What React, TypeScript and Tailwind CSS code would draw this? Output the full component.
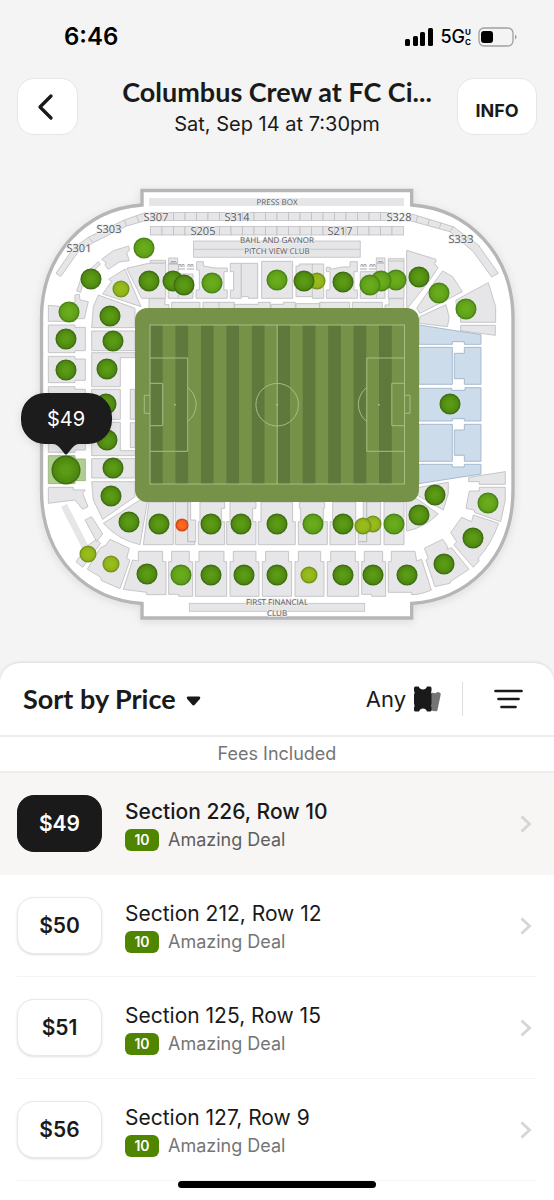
const SEAT = '#e6e6e8';
const SEAT_LINE = '#bfbfc3';

type Tone = 'dark' | 'light' | 'lime' | 'orange';

const TONES: Record<Tone, { inner: string; outer: string; ring: string }> = {
  dark: { inner: '#5a9a14', outer: '#4b840f', ring: '#416f14' },
  light: { inner: '#69ac1b', outer: '#5b9b18', ring: '#4c8519' },
  lime: { inner: '#98bc1b', outer: '#8caf18', ring: '#77941c' },
  orange: { inner: '#ff6a1f', outer: '#f4571a', ring: '#cf4d1b' },
};

// x, y, tone, radius
const DEALS: Array<[number, number, Tone, number]> = [
  [144, 248, 'light', 10], [91, 279, 'dark', 10], [121, 289, 'lime', 8], [149, 281, 'dark', 10],
  [173, 281, 'dark', 10], [184, 285, 'dark', 10], [212, 283, 'light', 10], [69, 312, 'light', 10],
  [110, 316, 'dark', 10], [277, 280, 'light', 10], [317, 281, 'lime', 8], [304, 281, 'dark', 10],
  [343, 282, 'dark', 10], [396, 280, 'light', 10], [381, 281, 'light', 10], [370, 285, 'light', 10],
  [419, 277, 'dark', 10], [439, 293, 'light', 10], [466, 309, 'light', 10],
  [66, 339, 'dark', 10], [113, 341, 'dark', 10], [66, 370, 'dark', 10], [107, 369, 'dark', 10],
  [106, 404, 'dark', 10], [107, 440, 'dark', 10], [66, 470, 'dark', 14], [113, 468, 'dark', 10],
  [111, 496, 'dark', 10], [450, 404, 'dark', 10],
  [129, 522, 'dark', 10], [159, 524, 'dark', 10], [182, 525, 'orange', 6], [211, 524, 'dark', 10],
  [241, 524, 'dark', 10], [277, 524, 'dark', 10], [313, 524, 'light', 10], [343, 524, 'dark', 10],
  [373, 524, 'lime', 8], [363, 526, 'lime', 8], [394, 524, 'light', 10], [419, 515, 'dark', 10],
  [435, 495, 'dark', 10], [488, 503, 'light', 10], [473, 538, 'dark', 10], [444, 564, 'dark', 10],
  [88, 554, 'lime', 8], [111, 564, 'lime', 8], [147, 574, 'dark', 10], [181, 575, 'light', 10],
  [211, 575, 'dark', 10], [244, 575, 'dark', 10], [277, 575, 'dark', 10], [309, 575, 'lime', 8],
  [343, 575, 'dark', 10], [373, 575, 'dark', 10], [407, 575, 'dark', 10],
];

// Seat blocks, one path list per part of the bowl, drawn at three units to the pixel
const BLOCKS: Array<{ origin: string; paths: string[] }> = [
  {
    origin: 'translate(30 180) scale(0.3333)',
    paths: [
      'M78 280L130 205L175 172L283 120L345 98L352 120L290 138L190 188L145 215L92 290ZM283 120L290 138M320 107L327 127M175 172L190 188',
      'M215 238L250 212L296 198L298 212L290 218L298 242L268 246L235 268L225 255L228 248Z',
      'M140 333L155 290L205 245L212 252L196 268L160 305L152 337Z',
      'M218 342L245 304L236 298L285 267L333 380Z',
      'M290 265L360 249H407V355H335Z',
      'M361 241H407V249H361Z',
      'M415 252H445V282H489V355H415ZM445 282V355M416 234H443V252H416Z',
      'M500 245H520V258L555 264H592V275H582V330H592V355H498V330H508V270H500Z',
      'M601 250H634V355H601V330H611V275H601Z',
      'M634 250H683V355H655V350H634Z',
      'M695 244H788V355H695Z',
      'M357 356H405V374H417V388H357Z',
      'M425 367H510V388H425ZM519 367H613V388H519ZM567 367V388M613 373H685V367H721V388H613Z',
      'M205 345L315 385V443H185L190 380Z',
      'M55 376L130 383V368H135V345L148 343L150 360L175 365L163 416H135V424H55Z',
    ],
  },
  {
    origin: 'translate(270 180) scale(0.3333)',
    paths: [
      'M425 102L550 140L625 195L685 280L665 291L610 215L540 155L420 122ZM443 108L438 126M478 118L474 137M513 128L508 146M550 140L540 155',
      'M410 211L498 238V246L492 250L505 262L480 300L410 388Z',
      'M505 290L518 273L548 290L577 335L545 352L450 400L440 385Z',
      'M450 410L528 374L537 410V418L532 440L447 430Z',
      'M558 360L655 308L677 380V427H572V400H560Z',
      'M78 258H88V252H161V355H127V350H78ZM127 252V350',
      'M169 262H181V268L218 261H240V245H262V275H252V330H262V355H169V330H180V275H169Z',
      'M271 275H345V355H271ZM319 234H345V275H319ZM319 275V355',
      'M355 236H402V355H355ZM355 243H402',
      'M40 367H76V388H3V373H40ZM149 367H239V388H149ZM247 367H337V388H247ZM78 371H149V388H78Z',
      'M345 375H357V356H401V388H345Z',
    ],
  },
  {
    origin: 'translate(10 320) scale(0.3333)',
    paths: [
      'M115 15H195V22H226V92H195V98H115Z',
      'M115 109H195V117H226V181H195V188H115Z',
      'M115 200H195V208H226V272H195V280H115Z',
      'M115 308H226V390H195V397H115Z',
      'M115 502H190V510H226L218 520L234 560L218 568L195 540L115 550Z',
      'M245 33H375V92H245Z',
      'M245 98H375V113H331V200H245Z',
      'M245 208H331V298H245Z',
      'M245 307H331V392H375V407H245Z',
      'M361 208H375V298H361ZM361 308H375V383H361Z',
      'M245 416H375V474H245Z',
    ],
  },
  {
    origin: 'translate(270 320) scale(0.3333)',
    paths: ['M572 16H676V46L572 32Z', 'M596 472L706 455V493H628V485H596Z'],
  },
  {
    origin: 'translate(30 480) scale(0.3333)',
    paths: [
      'M185 5H315V50L218 118L190 60Z',
      'M220 130L330 60L352 66L330 194Q265 180 220 130Z',
      'M357 66H430V194H340Z',
      'M436 66H473V185H495V194H436ZM473 66H482V120H497V185H473Z',
      'M510 66H584V85H574V125H584V194H505V125H510Z',
      'M600 66H678V85H668V125H678V194H590V125H600Z',
      'M693 66H788V125H796V194H685V125H693Z',
      'M325 214H398V245H408V344H350V337L280 328L308 240L325 243Z',
      'M425 214H478V245H488V349H446V343H416V245H425Z',
      'M507 214H582V245H590V349H496V245H507Z',
      'M610 214H678V245H687V349H600V245H610Z',
      'M707 214H776V245H785V349H697V245H707Z',
      'M240 178L298 205L290 235L300 240L270 326L215 302L210 290L172 268L210 205L228 195Z',
      'M138 245L175 195L200 178L212 190L158 262Z',
      'M165 120L185 110L218 162L200 185Z',
    ],
  },
  {
    origin: 'translate(270 480) scale(0.3333)',
    paths: [
      'M88 66H164V85H160V125H172V194H85V125H92V85H88Z',
      'M188 66H257V194H180V125H188Z',
      'M265 120H280V66H290V185H265ZM290 66H332V194H265V185H290Z',
      'M342 66H402V194H342Z',
      'M408 66L440 55L505 102Q460 145 410 153Z',
      'M447 22L535 7V40L520 90L440 45Z',
      'M85 214H152V245H162V349H75V245H85Z',
      'M182 214H256V245H266V349H172V245H182Z',
      'M283 214H338V245H347V349H305V343H275V245H283Z',
      'M364 214H435L440 243L455 238L484 330Q450 345 425 344V337H355V245H364Z',
      'M463 205L518 178L533 200L530 208L545 203L597 268L545 302L540 310L495 320L468 240L475 235Z',
      'M542 158L575 112L605 125L610 105L686 130Q665 190 625 235L628 242L610 262L552 195L560 185Z',
      'M598 33H628V22H706V60L692 125L615 98L612 90L588 85Z',
    ],
  },
];

const SUPPORTER_BLOCKS = [
  'M447 15L633 44V73H583V65H547V73H447Z',
  'M447 82H547V193H447Z',
  'M553 100H583V82H633V193H583V176H553Z',
  'M447 205H545V211H585V203H633V303H583V296H547V303H447Z',
  'M447 313H547V424H447Z',
  'M553 330H583V313H633V424H583V406H553Z',
  'M447 433H547V441H583V433H633V462L447 491Z',
];

const LABELS: Array<[string, number, number, number]> = [
  ['S301', 79, 252, 11], ['S303', 109, 233, 11], ['S307', 156, 221, 11], ['S314', 237, 221, 11],
  ['S328', 399, 221, 11], ['S205', 203, 235, 11], ['S217', 340, 235, 11], ['S333', 461, 243, 11],
  ['PRESS BOX', 277, 205, 8], ['BAHL AND GAYNOR', 277, 243, 8], ['PITCH VIEW CLUB', 277, 254, 8],
  ['FIRST FINANCIAL', 277, 605, 8], ['CLUB', 277, 616, 8],
];

const listings = [
  { price: '$49', title: 'Section 226, Row 10', selected: true },
  { price: '$50', title: 'Section 212, Row 12', selected: false },
  { price: '$51', title: 'Section 125, Row 15', selected: false },
  { price: '$56', title: 'Section 127, Row 9', selected: false },
];

function StatusBar() {
  return (
    <div className="flex h-[74px] items-center justify-between pl-16 pr-[37px]">
      <span className="text-2xl font-semibold text-black">6:46</span>
      <div className="flex items-center gap-[7px]">
        <svg width="28" height="18" viewBox="0 0 28 18" aria-hidden="true">
          <rect x="0" y="11" width="5" height="7" rx="1.5" />
          <rect x="8" y="8" width="5" height="10" rx="1.5" />
          <rect x="15" y="4" width="5" height="14" rx="1.5" />
          <rect x="23" y="0" width="5" height="18" rx="1.5" />
        </svg>
        <div className="flex items-center text-black">
          <span className="text-lg font-medium leading-5">5G</span>
          <span className="flex flex-col text-[8px] font-bold leading-[10px]">
            <span>U</span>
            <span>C</span>
          </span>
        </div>
        <svg width="39" height="20" viewBox="0 0 39 20" aria-hidden="true">
          <rect x="1" y="1" width="34" height="18" rx="5" fill="none" stroke="#a0a0a0" strokeWidth="1.3" />
          <rect x="3" y="4" width="12" height="12" rx="3" />
          <path d="M37 7.5Q38.6 8.5 38.6 10T37 12.5Z" fill="#a0a0a0" />
        </svg>
      </div>
    </div>
  );
}

function Header() {
  return (
    <header className="grid grid-cols-[80px_1fr_80px] items-start px-[17px] pt-1">
      <button aria-label="Back" className="flex h-[57px] w-[61px] items-center justify-center rounded-[17px] border border-[#e6e6e6] bg-white pr-1">
        <svg width="17" height="28" viewBox="0 0 17 28" fill="none" stroke="#1a1a1a" strokeWidth="3.3" strokeLinecap="round" strokeLinejoin="round" aria-hidden="true">
          <path d="M14 3L3 14L14 25" />
        </svg>
      </button>
      <div className="text-center">
        <h1 className="whitespace-nowrap font-['Lato',sans-serif] text-[27px] font-bold leading-7">Columbus Crew at FC Ci...</h1>
        <p className="mt-1 text-xl leading-7">Sat, Sep 14 at 7:30pm</p>
      </div>
      <button className="flex h-[57px] items-center justify-center rounded-[17px] border border-[#e6e6e6] bg-white pt-2 text-lg font-bold">
        INFO
      </button>
    </header>
  );
}

function Pitch() {
  return (
    <g>
      <rect x="135" y="308" width="284" height="194" rx="12" fill="#769249" />
      {[...Array(10)].map((_, i) => (
        <rect key={i} x={150 + i * 25.45} y="325" width="12.7" height="159" fill="#5f783c" />
      ))}
      <g fill="none" stroke="#a7bd86" strokeWidth="1">
        <rect x="150" y="325" width="254.5" height="159" />
        <path d="M277.2 325V484" />
        <circle cx="277.2" cy="404.7" r="21.3" />
        <path d="M150 358H187.7V451.3H150M150 383.3H162.7V425.7H150M150 395.3H144.3V413.3H150M187.7 387.5A21.3 21.3 0 0 1 187.7 421.5" />
        <path d="M404.5 358H366.8V451.3H404.5M404.5 383.3H391.8V425.7H404.5M404.5 395.3H410V413.3H404.5M366.8 387.5A21.3 21.3 0 0 0 366.8 421.5" />
      </g>
      <g fill="#c5d5ac">
        <circle cx="175" cy="404.7" r="0.8" />
        <circle cx="277.2" cy="404.7" r="0.8" />
        <circle cx="379" cy="404.7" r="0.8" />
      </g>
    </g>
  );
}

function StadiumMap() {
  return (
    <svg viewBox="0 138 554 525" className="block w-full" role="img" aria-label="Seating map">
      <defs>
        {Object.entries(TONES).map(([name, tone]) => (
          <radialGradient key={name} id={`tone-${name}`}>
            <stop offset="0.3" stopColor={tone.inner} />
            <stop offset="1" stopColor={tone.outer} />
          </radialGradient>
        ))}
        <filter id="soft" x="-10%" y="-10%" width="120%" height="120%">
          <feDropShadow dx="0" dy="2" stdDeviation="4" floodColor="#000" floodOpacity="0.1" />
        </filter>
      </defs>

      <path
        d="M142 190.5H411.7V205C469 209 513 255 513 318V490C513 560 466 600 411.7 603.5V618H142V603.5C88 600 41.5 560 41.5 490V318C41.5 255 85 209 142 205Z"
        fill="#fff"
        stroke="#b6b6b6"
        strokeWidth="3.4"
        filter="url(#soft)"
      />

      <rect x="149" y="198" width="255" height="8" fill={SEAT} />
      <g fill={SEAT} stroke={SEAT_LINE} strokeWidth="0.8">
        {[...Array(21)].map((_, i) => (
          <rect key={i} x={150.5 + i * 11.5} y="212.5" width="11.5" height="8" />
        ))}
        {[...Array(22)].map((_, i) => (
          <rect key={i} x={150.5 + i * 11.5} y="226.5" width="11.5" height="8.5" />
        ))}
        <path d="M193.5 241H360.3V257.3H193.5ZM193.5 249.3H360.3" />
        <rect x="189.3" y="603.3" width="175.4" height="8" />
      </g>
      <path d="M61 507L67 504L88 545L82 548Z" fill={SEAT} />

      {BLOCKS.map(group => (
        <g key={group.origin} transform={group.origin} fill={SEAT} stroke={SEAT_LINE} strokeWidth="2.6">
          {group.paths.map(d => <path key={d} d={d} />)}
        </g>
      ))}
      <g transform="translate(270 320) scale(0.3333)" fill="#cddceb" stroke="#9db3c8" strokeWidth="2.6">
        {SUPPORTER_BLOCKS.map(d => <path key={d} d={d} />)}
      </g>
      <g transform="translate(10 320) scale(0.3333)" fill="#b0cd92" stroke="#97b577" strokeWidth="2.6">
        <path d="M115 407H195V417H226V482H195V491H115Z" />
      </g>

      {/* suite seats */}
      <g fill="none" stroke="#a9a9ad" strokeWidth="1">
        {[181, 190, 363, 372].map(x => (
          <path key={x} d={`M${x - 3} 269H${x + 4}M${x - 2} 267V264.5H${x}V267M${x + 1} 267V264.5H${x + 3}V267`} />
        ))}
        <path d="M170 263H177M171 261.5H176M377 263H384M378 261.5H383" />
      </g>

      <Pitch />

      <g
        fill="#58585a"
        stroke="#ececee"
        strokeWidth="1.6"
        paintOrder="stroke"
        textAnchor="middle"
        textRendering="geometricPrecision"
        className="font-['Open_Sans',sans-serif]"
      >
        {LABELS.map(([text, x, y, size]) => (
          <text key={text} x={x} y={y} fontSize={size}>{text}</text>
        ))}
      </g>

      {DEALS.map(([x, y, tone, r]) => (
        <circle key={`${x}-${y}`} cx={x} cy={y} r={r - 0.2} fill={`url(#tone-${tone})`} stroke={TONES[tone].ring} strokeWidth="1.5" />
      ))}

      <g filter="url(#soft)">
        <path d="M45 393H88A24 24 0 0 1 112 417V420A24 24 0 0 1 88 444H79C76 444 74 446 72 448L68 453Q66 456 64 453L60 448C58 446 56 444 53 444H45A24 24 0 0 1 21 420V417A24 24 0 0 1 45 393Z" fill="#1a1a1a" />
      </g>
      <text x="66" y="426" fontSize="20" fill="#fff" textAnchor="middle">$49</text>
    </svg>
  );
}

function SortBar() {
  return (
    <div className="flex h-[74px] items-center justify-between border-b-2 border-[#ececec] pl-[23px] pr-[31px]">
      <button className="flex items-center gap-2.5 font-['Lato',sans-serif] text-[27px] font-bold">
        Sort by Price
        <svg width="15" height="10" viewBox="0 0 15 10" className="mt-1" aria-hidden="true">
          <path d="M1.8 0.5H13.2Q15 1 14 2.8L8.8 8.8Q7.5 10 6.2 8.8L1 2.8Q0 1 1.8 0.5Z" fill="#1a1a1a" />
        </svg>
      </button>
      <div className="flex items-center">
        <button className="flex items-center gap-2 text-[22px]">
          Any
          <svg width="27" height="26" viewBox="0 0 27 26" aria-hidden="true">
            <path d="M16 6.5L20 7Q21.5 8 23 6L25.5 6.6Q27 7 26.7 8.5L23.5 24Q23 25.5 21.5 25.2L17 24.5Z" fill="#757575" />
            <path d="M1.5 0.5H4.5Q6 3.5 9 3.5T13 0.5H16Q17.5 0.5 17.5 2V4.5Q16.5 6.5 17.5 8.5V17.5Q16.5 19.5 17.5 21.5V24Q17.5 25.5 16 25.5H13Q12 22.5 9 22.5T5 25.5H1.5Q0 25.5 0 24V21.5Q1 19.5 0 17.5V8.5Q1 6.5 0 4.5V2Q0 0.5 1.5 0.5Z" fill="#1a1a1a" />
          </svg>
        </button>
        <div className="ml-[21px] mr-[31px] h-[34px] w-px bg-[#dedede]" />
        <button aria-label="Filters">
          <svg width="29" height="20" viewBox="0 0 29 20" stroke="#1a1a1a" strokeWidth="2.7" strokeLinecap="round" aria-hidden="true">
            <path d="M1.5 2H27.5M4.5 10H24.5M7.5 18H21.5" />
          </svg>
        </button>
      </div>
    </div>
  );
}

function ListingRow({ price, title, selected }: { price: string; title: string; selected: boolean }) {
  return (
    <li className={selected ? 'bg-[#f7f6f5] px-[17px]' : 'px-[17px]'}>
      <button className={`flex h-[102px] w-full items-center border-b text-left ${selected ? 'border-transparent' : 'border-[#f3f3f3]'}`}>
        <span
          className={`flex h-[57px] w-[85px] shrink-0 items-center justify-center rounded-[17px] border text-[21px] font-semibold ${
            selected ? 'border-[#1a1a1a] bg-[#1a1a1a] text-white' : 'border-[#e8e8e8] bg-white shadow-sm'
          }`}
        >
          {price}
        </span>
        <span className="ml-[23px] flex-1 pt-1">
          <span className={`block text-[21px] leading-7 ${selected ? 'font-medium' : ''}`}>{title}</span>
          <span className={`flex items-center gap-[9px] text-lg leading-7 ${selected ? 'text-[#5e5e5e]' : 'text-[#757575]'}`}>
            <span className="flex h-[22px] w-[34px] items-center justify-center rounded-md bg-[#508500] text-sm font-semibold text-white">10</span>
            Amazing Deal
          </span>
        </span>
        <svg width="12" height="18" viewBox="0 0 12 18" fill="none" stroke="#d5d5d5" strokeWidth="2.8" className="mr-[5px]" aria-hidden="true">
          <path d="M1.5 1.5L9.5 9L1.5 16.5" />
        </svg>
      </button>
    </li>
  );
}

export default function App() {
  return (
    <div className="min-h-screen bg-[#f4f4f4] font-['Inter',sans-serif] text-[#1a1a1a]">
      <StatusBar />
      <Header />
      <StadiumMap />
      <section className="rounded-t-[20px] bg-white shadow-[0_-1px_3px_rgba(0,0,0,0.1)]">
        <SortBar />
        <p className="border-b-2 border-[#ececec] text-center text-lg leading-[34px] text-[#757575]">Fees Included</p>
        <ul>
          {listings.map(item => <ListingRow key={item.title} {...item} />)}
        </ul>
        <div className="flex justify-center pb-3">
          <div className="h-[7px] w-[198px] rounded-full bg-black" />
        </div>
      </section>
    </div>
  );
}
